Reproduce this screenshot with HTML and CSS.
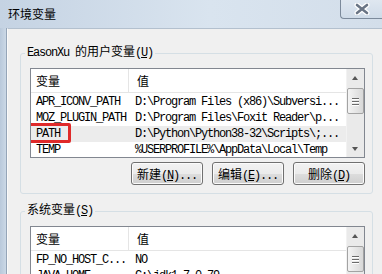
FILE: index.html
```html
<!DOCTYPE html>
<html lang="zh-CN">
<head>
  <meta charset="UTF-8">
  <title>环境变量</title>
  <link rel="stylesheet" href="styles.css">
</head>
<body>
  <div class="titlebar">
    <span class="title">环境变量</span>
    <div class="close">
      <svg width="16" height="12" viewBox="0 0 16 12">
        <path d="M3 2 L13 10 M13 2 L3 10" stroke="#ffffff" stroke-width="5" stroke-linecap="round"/>
        <path d="M3 2 L13 10 M13 2 L3 10" stroke="#6a7585" stroke-width="2.6" stroke-linecap="round"/>
      </svg>
    </div>
  </div>

  <div class="window">
    <div class="frame"></div>
    <div class="client">

      <fieldset class="group">
        <legend><span class="a">EasonXu </span>的用户变量<span class="a">(<u>U</u>)</span></legend>
        <div class="list">
          <div class="table">
            <div class="head">
              <div class="col-name">变量</div>
              <div class="col-value">值</div>
            </div>
            <div class="rows">
              <div class="row"><div class="col-name">APR_ICONV_PATH</div><div class="col-value">D:\Program Files (x86)\Subversi...</div></div>
              <div class="row"><div class="col-name">MOZ_PLUGIN_PATH</div><div class="col-value">D:\Program Files\Foxit Reader\p...</div></div>
              <div class="row selected"><div class="col-name">PATH<span class="mark"></span></div><div class="col-value">D:\Python\Python38-32\Scripts\;...</div></div>
              <div class="row"><div class="col-name">TEMP</div><div class="col-value">%USERPROFILE%\AppData\Local\Temp</div></div>
            </div>
          </div>
          <div class="scrollbar">
            <div class="arrow up"></div>
            <div class="track"><div class="thumb"><i></i><i></i><i></i></div></div>
            <div class="arrow down"></div>
          </div>
        </div>
        <div class="buttons">
          <button>新建<span class="a">(<u>N</u>)...</span></button>
          <button>编辑<span class="a">(<u>E</u>)...</span></button>
          <button>删除<span class="a">(<u>D</u>)</span></button>
        </div>
      </fieldset>

      <fieldset class="group">
        <legend>系统变量<span class="a">(<u>S</u>)</span></legend>
        <div class="list">
          <div class="table">
            <div class="head">
              <div class="col-name">变量</div>
              <div class="col-value">值</div>
            </div>
            <div class="rows">
              <div class="row"><div class="col-name">FP_NO_HOST_C...</div><div class="col-value">NO</div></div>
              <div class="row"><div class="col-name">JAVA_HOME</div><div class="col-value">C:\jdk1.7.0_79</div></div>
            </div>
          </div>
          <div class="scrollbar">
            <div class="arrow up"></div>
            <div class="track"><div class="thumb"><i></i><i></i><i></i></div></div>
            <div class="arrow down"></div>
          </div>
        </div>
      </fieldset>

    </div>
  </div>
</body>
</html>
```

FILE: styles.css
```css
html, body {
  margin: 0;
  padding: 0;
}
body {
  width: 382px;
  height: 274px;
  overflow: hidden;
  font-family: "Liberation Mono", "Noto Sans CJK SC", monospace;
  font-size: 12px;
  color: #000;
  background: #f0f0f0;
}
.a {
  letter-spacing: -1.2px;
}
u {
  text-decoration: underline;
}

/* title bar */
.titlebar {
  height: 28px;
  display: flex;
  align-items: center;
  background: linear-gradient(to right, #c5d3e3, #d9e4ef 55%, #d3deea);
}
.title {
  padding-left: 8px;
  font-family: "Noto Sans CJK SC", sans-serif;
  font-size: 12px;
  line-height: 14px;
}
.close {
  margin-left: auto;
  align-self: flex-start;
  width: 41px;
  height: 18px;
  border-left: 1px solid #7c8a9b;
  border-bottom: 1px solid #7c8a9b;
  border-bottom-left-radius: 4px;
  background: linear-gradient(#dfe7f0, #cfdbe8);
  display: flex;
  align-items: center;
  justify-content: center;
}

/* window body */
.window {
  display: flex;
  height: 246px;
  overflow: hidden;
}
.frame {
  width: 6px;
  background: linear-gradient(to right, #b9c9db, #cbd8e6);
  border-right: 1px solid #95a5b8;
}
.client {
  flex: 1;
  background: #f0f0f0;
  border-top: 1px solid #b3c0ce;
  border-left: 1px solid #fafafa;
}

/* group boxes */
.group {
  margin: 17px 9px 0 12px;
  padding: 0 6px 8px 4px;
  border: 1px solid #d5dfe5;
  border-radius: 3px;
}
.group + .group {
  margin-top: 10px;
}
.group legend {
  padding: 0 2px;
  line-height: 14px;
}

/* list view */
.list {
  display: flex;
  width: 333px;
  height: 88px;
  margin: 8px 0 0 5px;
  border: 1px solid #828790;
  background: #fff;
}
.table {
  flex: 1;
  overflow: hidden;
}
.head {
  display: flex;
  height: 23px;
  align-items: center;
  border-bottom: 1px solid #e5e5e5;
  font-family: "Noto Sans CJK SC", sans-serif;
}
.head .col-name {
  border-right: 1px solid #e5e5e5;
  height: 23px;
  line-height: 23px;
}
.rows {
  padding-top: 1px;
  letter-spacing: -1.2px;
  white-space: nowrap;
}
.row {
  display: flex;
  height: 16px;
  line-height: 16px;
}
.row.selected {
  background: #ececec;
}
.col-name {
  width: 92px;
  padding-left: 5px;
  position: relative;
}
.col-value {
  padding-left: 7px;
}
.head .col-value {
  padding-left: 8px;
}
.mark {
  position: absolute;
  left: -4px;
  top: -3px;
  width: 38px;
  height: 14px;
  border: 3px solid #df2a2a;
  border-radius: 2px;
}

/* scrollbar */
.scrollbar {
  width: 17px;
  display: flex;
  flex-direction: column;
  background: #eaeaea;
  border-left: 1px solid #f2f2f2;
}
.arrow {
  height: 17px;
  position: relative;
}
.arrow::after {
  content: "";
  position: absolute;
  left: 5px;
  width: 0;
  height: 0;
  border-left: 3.5px solid transparent;
  border-right: 3.5px solid transparent;
}
.arrow.up::after {
  top: 7px;
  border-bottom: 4px solid #555;
}
.arrow.down::after {
  top: 7px;
  border-top: 4px solid #555;
}
.track {
  flex: 1;
  padding-top: 2px;
}
.thumb {
  height: 24px;
  border: 1px solid #a3a3a3;
  border-radius: 2px;
  background: linear-gradient(to right, #f4f4f4, #e6e6e6 50%, #d8d8d8);
  display: flex;
  flex-direction: column;
  align-items: center;
  justify-content: center;
  gap: 2px;
}
.thumb i {
  display: block;
  width: 7px;
  height: 1px;
  background: #6a6a6a;
  box-shadow: 0 1px 0 #fff;
}

/* buttons */
.buttons {
  display: flex;
  justify-content: flex-end;
  gap: 9px;
  width: 335px;
  margin: 4px 0 0 5px;
}
button {
  width: 72px;
  height: 23px;
  padding: 0;
  font-family: "Liberation Mono", "Noto Sans CJK SC", monospace;
  font-size: 12px;
  color: #000;
  border: 1px solid #707070;
  border-radius: 3px;
  background: linear-gradient(#f2f2f2, #ebebeb 50%, #dddddd 51%, #cfcfcf);
  box-shadow: inset 0 0 0 1px #fbfbfb;
}
```
